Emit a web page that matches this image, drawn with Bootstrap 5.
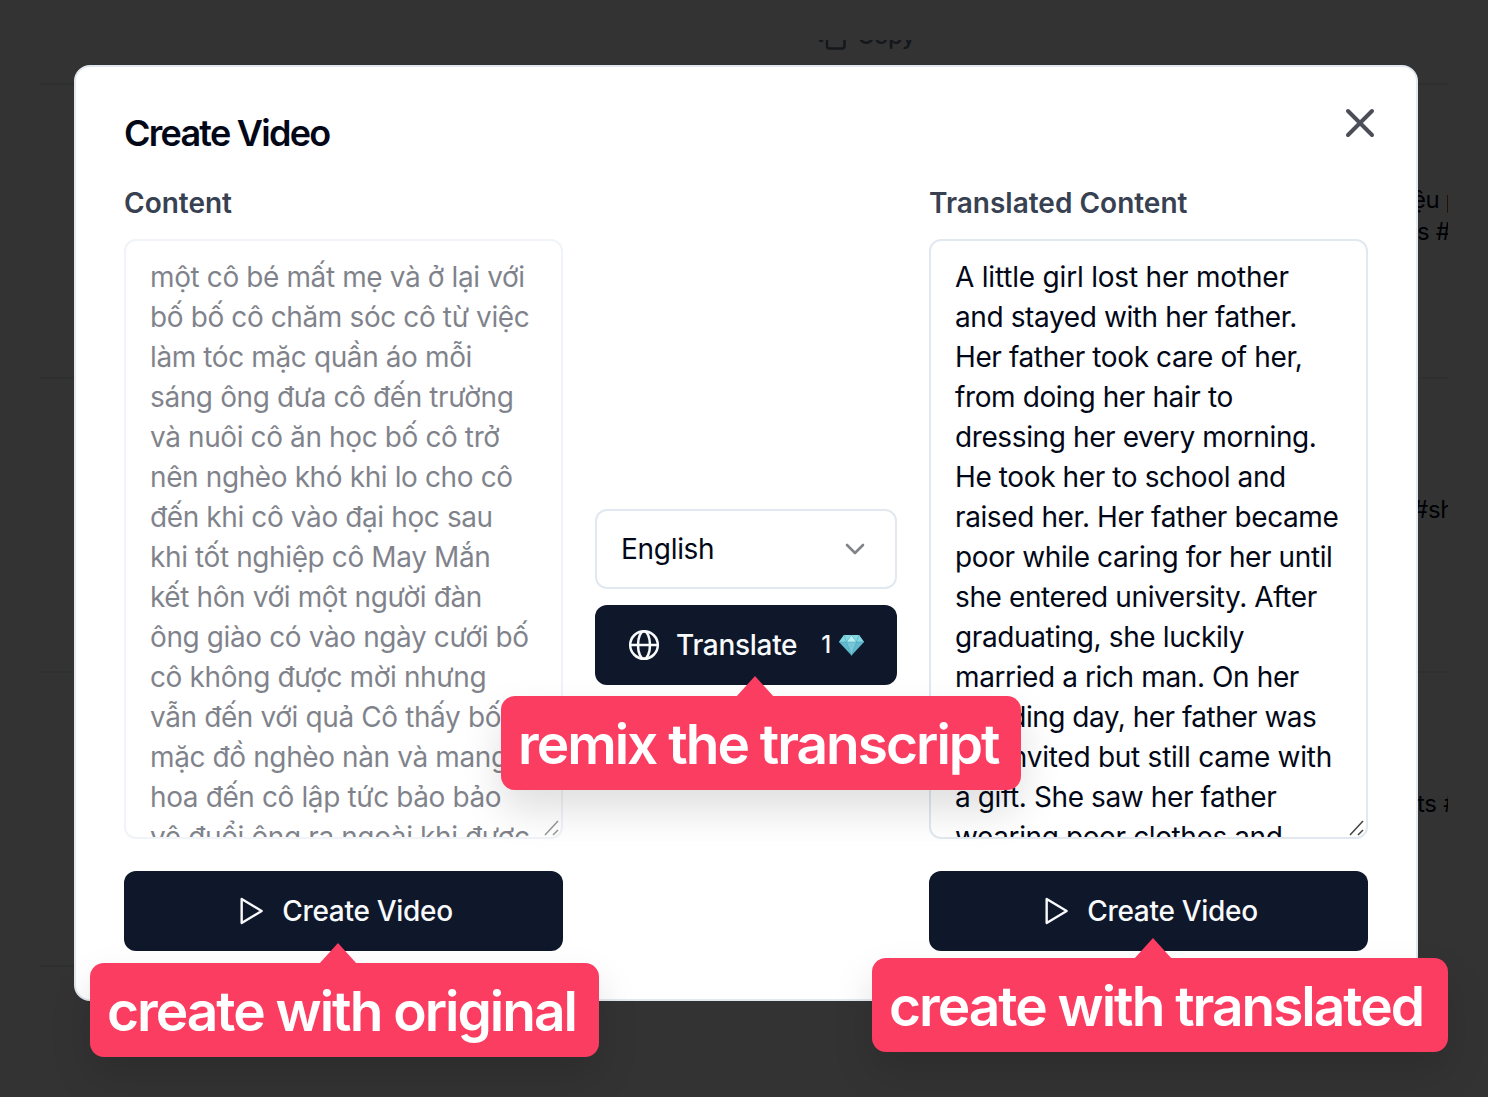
<!DOCTYPE html>
<html lang="en">
<head>
<meta charset="utf-8">
<meta name="viewport" content="width=device-width, initial-scale=1">
<title>Create Video</title>
<link href="https://cdn.jsdelivr.net/npm/bootstrap@5.3.0/dist/css/bootstrap.min.css" rel="stylesheet">
<style>
html, body { height: 100%; overflow: hidden; }
body { font-family: Inter, "Noto Sans", sans-serif; color: #020817; background: #fff; }
.stage { width: 1488px; height: 1097px; }
.page-table { padding: 40px 40px 0; height: 100%; }
.page-row { height: 294px; border-bottom: 2px solid #e2e8f0; overflow: hidden; white-space: nowrap; font-size: 24px; line-height: 32px; letter-spacing: -.3px; }
.page-row.first-row { height: 45px; color: #64748b; }
.first-row .copy-line { margin: -20px 0 0 777px; height: 32px; gap: 10px; font-weight: 500; letter-spacing: -.6px; }
.tag-cell { margin-left: 1369px; }
.tag-lead { margin-left: 3px; letter-spacing: -.5px; }
.shade { background: rgba(0,0,0,.8); }
.dialog-wrap { padding: 65px 70px 0 74px; }
.dialog-box { width: 1344px; height: 936px; border: 2px solid #e2e8f0; border-radius: 16px; background: #fff; padding: 48px; }
.dialog-title { font-size: 36px; line-height: 36px; font-weight: 640; letter-spacing: -1.75px; }
.close-x { margin: -8px -8px 0 0; width: 32px; height: 32px; color: #4b4d59; }
.side-col { width: 439px; }
.mid-col { width: 302px; gap: 16px; padding-top: 326px; }
.field-label { font-size: 28px; line-height: 40px; font-weight: 600; color: #374151; }
.script-box { height: 600px; margin-top: 16px; border: 2px solid #e2e8f0; border-radius: 12px; padding: 16px 24px; font-size: 28px; line-height: 40px; letter-spacing: -.39px; white-space: nowrap; overflow: hidden; }
.opening { letter-spacing: -.2px; }
.tight-line { letter-spacing: -.51px; }
.loose-line { letter-spacing: -.26px; }
.script-box.faded { opacity: .5; }
.grip { right: 1px; bottom: 1px; }
.dark-btn { height: 80px; border-radius: 12px; background: #0f172a; color: #f8fafc; font-size: 28px; font-weight: 540; letter-spacing: -.3px; border: 0; padding: 0; }
.dark-btn.make-btn { margin-top: 32px; gap: 15px; padding-left: 1px; }
.lang-select { height: 80px; border: 2px solid #e2e8f0; border-radius: 12px; padding: 0 24px; font-size: 28px; letter-spacing: -.3px; }
.cost { font-size: 24px; margin-left: 24px; gap: 8px; }
.callout { background: #fb3d62; border-radius: 14px; color: #fff; height: 94px; font-size: 55px; font-weight: 590; letter-spacing: -2px; white-space: nowrap; padding: 3px 0 0 17px; box-shadow: 0 20px 40px rgba(0,0,0,.13); }
.callout::before { content: ""; position: absolute; top: -20px; border: 19px solid transparent; border-top: 0; border-bottom: 21px solid #fb3d62; }
.c-remix { left: 501px; top: 696px; width: 520px; }
.c-remix::before { left: 235px; }
.c-orig { left: 90px; top: 963px; width: 509px; }
.c-orig::before { left: 229px; }
.c-trans { left: 872px; top: 958px; width: 576px; }
.c-trans::before { left: 262px; }
</style>
<script src="https://cdn.jsdelivr.net/npm/bootstrap@5.3.0/dist/js/bootstrap.bundle.min.js"></script>
</head>
<body>
<div class="stage position-relative overflow-hidden">
  <div class="page-table">
    <div class="page-row first-row"><div class="copy-line d-flex align-items-center">
      <svg width="30" height="30" viewBox="0 0 24 24" fill="none" stroke="currentColor" stroke-width="2" stroke-linecap="round" stroke-linejoin="round"><rect x="8" y="8" width="14" height="14" rx="2"/><path d="M4 16c-1.1 0-2-.9-2-2V4c0-1.1.9-2 2-2h10c1.1 0 2 .9 2 2"/></svg>
      <span>Copy</span></div></div>
    <div class="page-row"><div class="tag-cell" style="padding-top:99px"><span class="tag-lead">ệu p</span><br><span class="ms-2">s #</span></div></div>
    <div class="page-row"><div class="tag-cell" style="padding-top:115px"><span class="ms-1">#sh</span></div></div>
    <div class="page-row"><div class="tag-cell" style="padding-top:115px"><span class="ms-2">ts #</span></div></div>
  </div>
  <div class="shade position-absolute top-0 start-0 w-100 h-100"></div>

  <div class="dialog-wrap position-absolute top-0 start-0">
    <div class="dialog-box d-flex flex-column">
      <div class="d-flex justify-content-between align-items-start">
        <h1 class="dialog-title m-0">Create Video</h1>
        <svg class="close-x" viewBox="0 0 32 32" fill="none" stroke="currentColor" stroke-width="4" stroke-linecap="round"><path d="M4 4 28 28M28 4 4 28"/></svg>
      </div>
      <div class="d-flex justify-content-between mt-4 pt-2">
        <div class="side-col d-flex flex-column">
          <div class="field-label">Content</div>
          <div class="script-box faded position-relative">một cô bé mất mẹ và ở lại với<br>bố bố cô chăm sóc cô từ việc<br>làm tóc mặc quần áo mỗi<br>sáng ông đưa cô đến trường<br>và nuôi cô ăn học bố cô trở<br>nên nghèo khó khi lo cho cô<br>đến khi cô vào đại học sau<br>khi tốt nghiệp cô May Mắn<br>kết hôn với một người đàn<br>ông giào có vào ngày cưới bố<br>cô không được mời nhưng<br>vẫn đến với quả Cô thấy bố<br>mặc đồ nghèo nàn và mang<br>hoa đến cô lập tức bảo bảo<br>vệ đuổi ông ra ngoài khi được
            <svg class="grip position-absolute" width="16" height="16" viewBox="0 0 16 16" stroke="#333" stroke-width="1.5"><path d="M1 15 14 1M9 15l5-5"/></svg>
          </div>
          <button class="dark-btn make-btn btn d-flex align-items-center justify-content-center w-100">
            <svg width="32" height="32" viewBox="0 0 24 24" fill="none" stroke="currentColor" stroke-width="1.8" stroke-linejoin="round"><path d="m5 3 15 9-15 9Z"/></svg><span>Create Video</span></button>
        </div>
        <div class="mid-col d-flex flex-column">
          <div class="lang-select d-flex align-items-center justify-content-between"><span>English</span>
            <svg width="32" height="32" viewBox="0 0 32 32" fill="none" stroke="#818389" stroke-width="2.6" stroke-linecap="round" stroke-linejoin="round"><path d="m8 12 8 8 8-8"/></svg></div>
          <button class="dark-btn btn d-flex align-items-center justify-content-center w-100">
            <svg width="32" height="32" viewBox="0 0 32 32" fill="none" stroke="currentColor" stroke-width="2.5"><circle cx="16" cy="16" r="13.8"/><path d="M2 16h28"/><ellipse cx="16" cy="16" rx="6" ry="13.8"/></svg>
            <span class="ms-3">Translate</span>
            <span class="cost d-flex align-items-center"><span>1</span>
              <svg width="25" height="22" viewBox="0 0 25 22"><path d="M5 1h15l5 7-12.500 13.500L0 8Z" fill="#62b9cf"/><path d="M5 1h15l5 7H0Z" fill="#83d7e3"/><path d="m12.500 1 5 7h-10Z" fill="#b6f0f2"/><path d="m7.500 8 5 13.500L17.500 8Z" fill="#75c6d6"/><path d="M5 1 7.500 8l5-7 5 7L20 1M0 8h25M7.500 8l5 13.500 5-13.500" fill="none" stroke="#4a9fb3" stroke-width=".5"/></svg></span>
          </button>
        </div>
        <div class="side-col d-flex flex-column">
          <div class="field-label">Translated Content</div>
          <div class="script-box position-relative"><span class="opening">A little girl lost her mother</span><br>and stayed with her father.<br>Her father took care of her,<br>from doing her hair to<br>dressing her every morning.<br>He took her to school and<br>raised her. Her father became<br>poor while caring for her until<br>she entered university. After<br>graduating, she luckily<br>married a rich man. On her<br><span class="tight-line">wedding day, her father was</span><br><span class="loose-line">not invited but still came with</span><br>a gift. She saw her father<br>wearing poor clothes and
            <svg class="grip position-absolute" width="16" height="16" viewBox="0 0 16 16" stroke="#444" stroke-width="1.5"><path d="M1 15 14 1M9 15l5-5"/></svg>
          </div>
          <button class="dark-btn make-btn btn d-flex align-items-center justify-content-center w-100">
            <svg width="32" height="32" viewBox="0 0 24 24" fill="none" stroke="currentColor" stroke-width="1.8" stroke-linejoin="round"><path d="m5 3 15 9-15 9Z"/></svg><span>Create Video</span></button>
        </div>
      </div>
    </div>
  </div>

  <div class="callout c-remix position-absolute d-flex align-items-center">remix the transcript</div>
  <div class="callout c-orig position-absolute d-flex align-items-center">create with original</div>
  <div class="callout c-trans position-absolute d-flex align-items-center">create with translated</div>
</div>
</body>
</html>
